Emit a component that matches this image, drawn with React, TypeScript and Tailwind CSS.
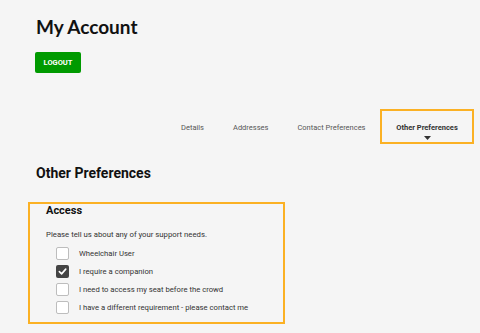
import React from "react";

const roboto = { fontFamily: "Roboto, 'Liberation Sans', sans-serif" };

function Box({ checked }: { checked?: boolean }) {
  if (checked) {
    return (
      <span className="flex h-[13px] w-[13px] items-center justify-center rounded-[2px] bg-[#444444]">
        <svg width="9" height="9" viewBox="0 0 10 10">
          <path d="M1.5 5.2 L4 7.6 L8.6 2.4" fill="none" stroke="#ffffff" strokeWidth="1.8" strokeLinecap="round" strokeLinejoin="round" />
        </svg>
      </span>
    );
  }
  return <span className="block h-[13px] w-[13px] rounded-[2px] border border-[#bdbdbd] bg-white" />;
}

export default function App() {
  const items = [
    { label: "Wheelchair User", checked: false },
    { label: "I require a companion", checked: true },
    { label: "I need to access my seat before the crowd", checked: false },
    { label: "I have a different requirement - please contact me", checked: false },
  ];
  return (
    <div className="min-h-[333px] w-[480px] bg-[#f5f5f5] text-[#222]" style={roboto}>
      <div className="pl-[36px] pt-[15px]">
        <h1 className="text-[19px] font-bold leading-[24px] text-[#111]" style={{ fontFamily: "Lato, 'Liberation Sans', sans-serif" }}>
          My Account
        </h1>
        <button className="-ml-px mt-[13px] flex h-[21px] w-[46px] items-center justify-center rounded-[2px] bg-[#009a00] text-[7.5px] font-bold text-white">
          LOGOUT
        </button>
      </div>
      <div className="mt-[36px] flex justify-end pr-[6px]">
        <div className="flex items-start text-[7.5px] text-[#555]">
          <div className="px-[14.5px] pt-[13px]">Details</div>
          <div className="px-[14.5px] pt-[13px]">Addresses</div>
          <div className="px-[14.5px] pt-[13px]">Contact Preferences</div>
          <div className="flex h-[35px] w-[94px] flex-col items-center border-2 border-[#fbb124] pt-[11px] font-bold text-[#333]">
            <span>Other Preferences</span>
            <svg width="7" height="4" viewBox="0 0 7 4" className="mt-[3px]">
              <path d="M0 0 L7 0 L3.5 4 Z" fill="#333" />
            </svg>
          </div>
        </div>
      </div>
      <h2 className="ml-[36px] mt-[20px] text-[14px] font-bold leading-[19px] text-[#111]">Other Preferences</h2>
      <div className="ml-[28px] mt-[19px] h-[122px] w-[257px] border-2 border-[#fbb124] pl-[16px] pt-[1px]">
        <div className="text-[11px] font-bold leading-[12px] text-[#111]">Access</div>
        <div className="mt-[13px] text-[7.75px] leading-[10px] text-[#333]">Please tell us about any of your support needs.</div>
        <div className="mt-[7px] flex flex-col gap-[5px] pl-[10px]">
          {items.map((it) => (
            <div key={it.label} className="flex items-center gap-[10px]">
              <Box checked={it.checked} />
              <span className="text-[7.7px] leading-[13px] text-[#333]">{it.label}</span>
            </div>
          ))}
        </div>
      </div>
    </div>
  );
}
